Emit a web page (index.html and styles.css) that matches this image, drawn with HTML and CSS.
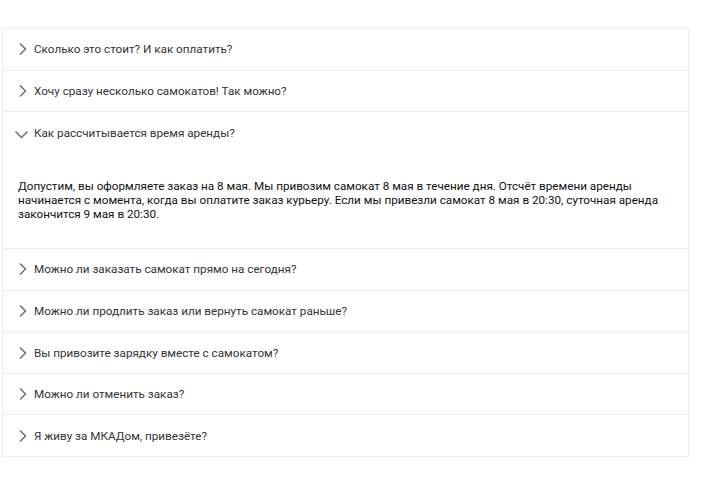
FILE: index.html
```html
<!DOCTYPE html>
<html lang="ru">
<head>
<meta charset="utf-8">
<link rel="stylesheet" href="styles.css">
</head>
<body>
<div class="faq">
  <div class="item">
    <div class="head"><svg class="chev" viewBox="0 0 10 14"><path d="M2 1.5 L7.5 7 L2 12.5"/></svg><span>Сколько это стоит? И как оплатить?</span></div>
  </div>
  <div class="item">
    <div class="head"><svg class="chev" viewBox="0 0 10 14"><path d="M2 1.5 L7.5 7 L2 12.5"/></svg><span>Хочу сразу несколько самокатов! Так можно?</span></div>
  </div>
  <div class="item open">
    <div class="head"><svg class="chev down" viewBox="0 0 15 10"><path d="M1.5 2.5 L7.5 8.5 L13.5 2.5"/></svg><span>Как рассчитывается время аренды?</span></div>
    <div class="body">Допустим, вы оформляете заказ на 8 мая. Мы привозим самокат 8 мая в течение дня. Отсчёт времени аренды начинается с момента, когда вы оплатите заказ курьеру. Если мы привезли самокат 8 мая в 20:30, суточная аренда закончится 9 мая в 20:30.</div>
  </div>
  <div class="item">
    <div class="head"><svg class="chev" viewBox="0 0 10 14"><path d="M2 1.5 L7.5 7 L2 12.5"/></svg><span>Можно ли заказать самокат прямо на сегодня?</span></div>
  </div>
  <div class="item">
    <div class="head"><svg class="chev" viewBox="0 0 10 14"><path d="M2 1.5 L7.5 7 L2 12.5"/></svg><span>Можно ли продлить заказ или вернуть самокат раньше?</span></div>
  </div>
  <div class="item">
    <div class="head"><svg class="chev" viewBox="0 0 10 14"><path d="M2 1.5 L7.5 7 L2 12.5"/></svg><span>Вы привозите зарядку вместе с самокатом?</span></div>
  </div>
  <div class="item">
    <div class="head"><svg class="chev" viewBox="0 0 10 14"><path d="M2 1.5 L7.5 7 L2 12.5"/></svg><span>Можно ли отменить заказ?</span></div>
  </div>
  <div class="item">
    <div class="head"><svg class="chev" viewBox="0 0 10 14"><path d="M2 1.5 L7.5 7 L2 12.5"/></svg><span>Я живу за МКАДом, привезёте?</span></div>
  </div>
</div>
</body>
</html>
```
FILE: styles.css
```css
html, body {
  margin: 0;
  padding: 0;
  background: #fff;
}
body {
  padding: 28px 0 0 2px;
  font-family: Roboto, "Noto Sans", sans-serif;
  font-size: 11.7px;
  color: #222;
}
.faq {
  width: 685px;
  border: 1px solid #ececec;
  box-shadow: 0 1px 2px rgba(0,0,0,0.04);
}
.item + .item {
  border-top: 1px solid #ececec;
}
.head {
  height: 40.65px;
  display: flex;
  align-items: center;
  padding-left: 15px;
  gap: 6px;
  color: #333;
}
.chev {
  width: 10px;
  height: 14px;
  fill: none;
  stroke: #707070;
  stroke-width: 1.5;
}
.chev.down {
  width: 15px;
  height: 10px;
  margin-left: -4px;
  margin-right: -1px;
  margin-top: 3px;
}
.body {
  padding: 26px 20px 27px 15px;
  line-height: 14px;
  color: #111;
}
```
